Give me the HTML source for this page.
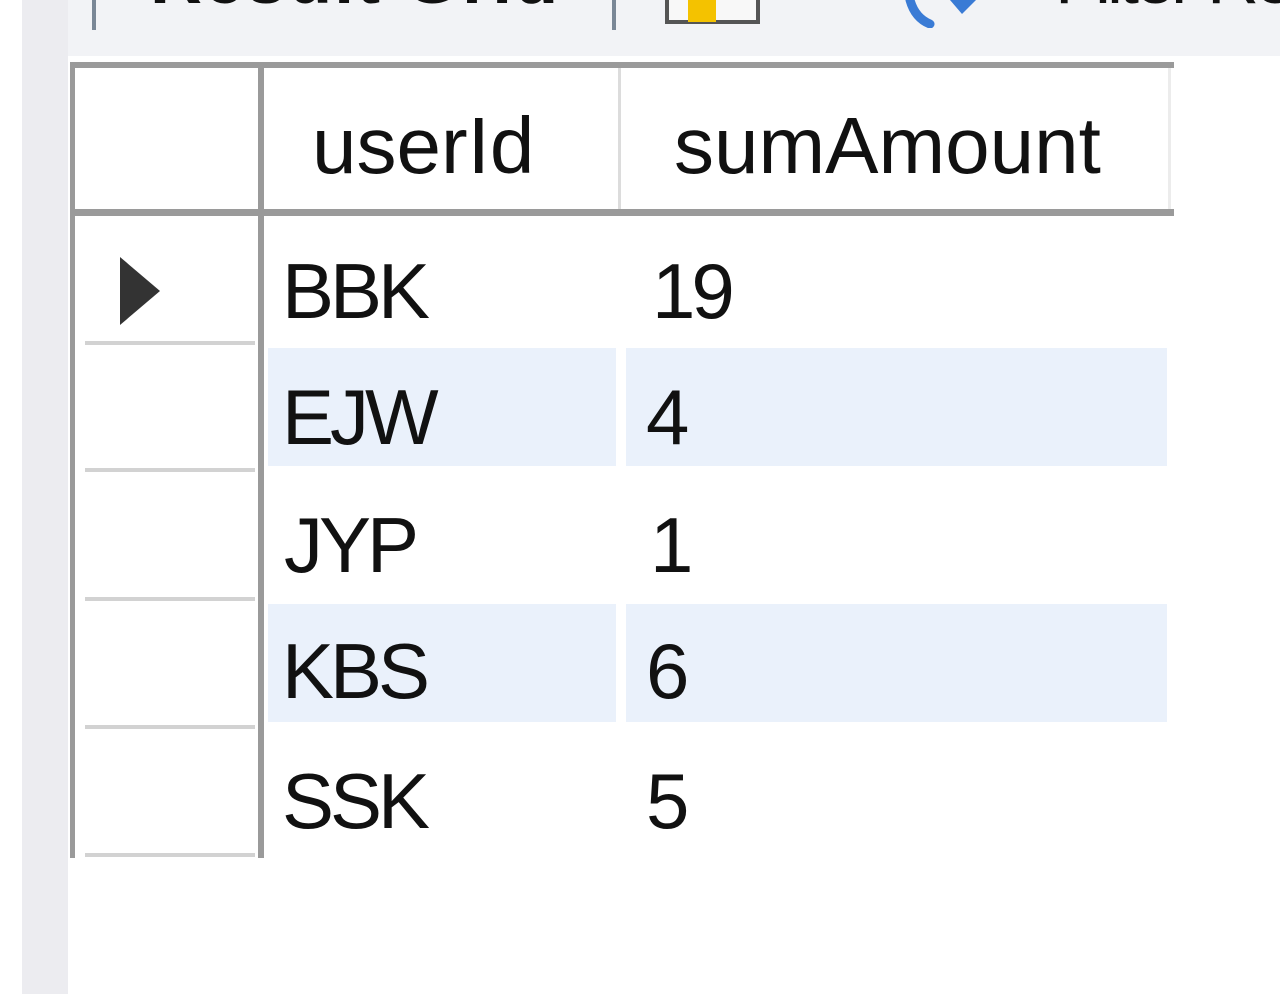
<!DOCTYPE html>
<html><head><meta charset="utf-8"><style>
body{margin:0;width:1280px;height:994px;position:relative;overflow:hidden;background:#fff;font-family:"Liberation Sans",Tahoma,sans-serif;}
div{position:absolute;box-sizing:border-box}
.t{font-size:78px;color:#111;line-height:1;white-space:nowrap;letter-spacing:-4px}
.h{font-size:80px;color:#111;line-height:1;white-space:nowrap;letter-spacing:0px}
.rs{left:85px;width:170px;height:4px;background:#d2d2d2}
.alt{background:#eaf1fb}
</style></head><body>
<div style="left:22px;top:0;width:46px;height:994px;background:#ececf0"></div>
<div style="left:68px;top:0;width:1212px;height:56px;background:#f2f3f6"></div>
<div style="left:92px;top:0;width:4px;height:30px;background:#7a8796"></div>
<div style="left:612px;top:0;width:4px;height:30px;background:#7a8796"></div>
<div style="left:150px;top:0;width:410px;height:10px;overflow:hidden"><div class="t" style="left:0;top:-57px;font-weight:bold;font-size:72px;letter-spacing:2px">Result Grid</div></div>
<div style="left:665px;top:0;width:95px;height:24px;border:4px solid #555;border-top:none;background:#f8f8f8"></div>
<div style="left:688px;top:0;width:28px;height:22px;background:#f4c200"></div>
<div style="left:900px;top:0;width:85px;height:28px;overflow:hidden"><svg width="85" height="28"><path d="M10 0 Q15 18 30 24" stroke="#3a7bd5" stroke-width="9" fill="none" stroke-linecap="round"/><path d="M50 0 L62 14 L76 0" fill="#3a7bd5"/></svg></div>
<div style="left:1055px;top:0;width:225px;height:10px;overflow:hidden"><div class="t" style="left:0;top:-57px;font-size:72px">Filter Rows</div></div>
<!-- table -->
<div style="left:70px;top:62px;width:1104px;height:6px;background:#9a9a9a"></div>
<div style="left:70px;top:62px;width:5px;height:796px;background:#9a9a9a"></div>
<div style="left:258px;top:62px;width:6px;height:796px;background:#9a9a9a"></div>
<div style="left:618px;top:68px;width:3px;height:142px;background:#dcdcdc"></div>
<div style="left:1168px;top:68px;width:3px;height:142px;background:#ececec"></div>
<div style="left:70px;top:209px;width:1104px;height:7px;background:#9a9a9a"></div>
<div class="h" style="left:312px;top:106px">userId</div>
<div class="h" style="left:674px;top:106px">sumAmount</div>
<div class="alt" style="left:268px;top:348px;width:348px;height:118px"></div>
<div class="alt" style="left:626px;top:348px;width:541px;height:118px"></div>
<div class="alt" style="left:268px;top:604px;width:348px;height:118px"></div>
<div class="alt" style="left:626px;top:604px;width:541px;height:118px"></div>
<div class="rs" style="top:341px"></div>
<div class="rs" style="top:468px"></div>
<div class="rs" style="top:597px"></div>
<div class="rs" style="top:725px"></div>
<div class="rs" style="top:853px"></div>
<svg style="position:absolute;left:118px;top:255px" width="45" height="70"><path d="M2 2 L42 36 L2 70Z" fill="#333"/></svg>
<div class="t" style="left:282px;top:252px">BBK</div><div class="t" style="left:652px;top:252px">19</div>
<div class="t" style="left:282px;top:378px">EJW</div><div class="t" style="left:646px;top:378px">4</div>
<div class="t" style="left:284px;top:506px">JYP</div><div class="t" style="left:650px;top:506px">1</div>
<div class="t" style="left:282px;top:632px">KBS</div><div class="t" style="left:646px;top:632px">6</div>
<div class="t" style="left:282px;top:762px">SSK</div><div class="t" style="left:646px;top:762px">5</div>
</body></html>
